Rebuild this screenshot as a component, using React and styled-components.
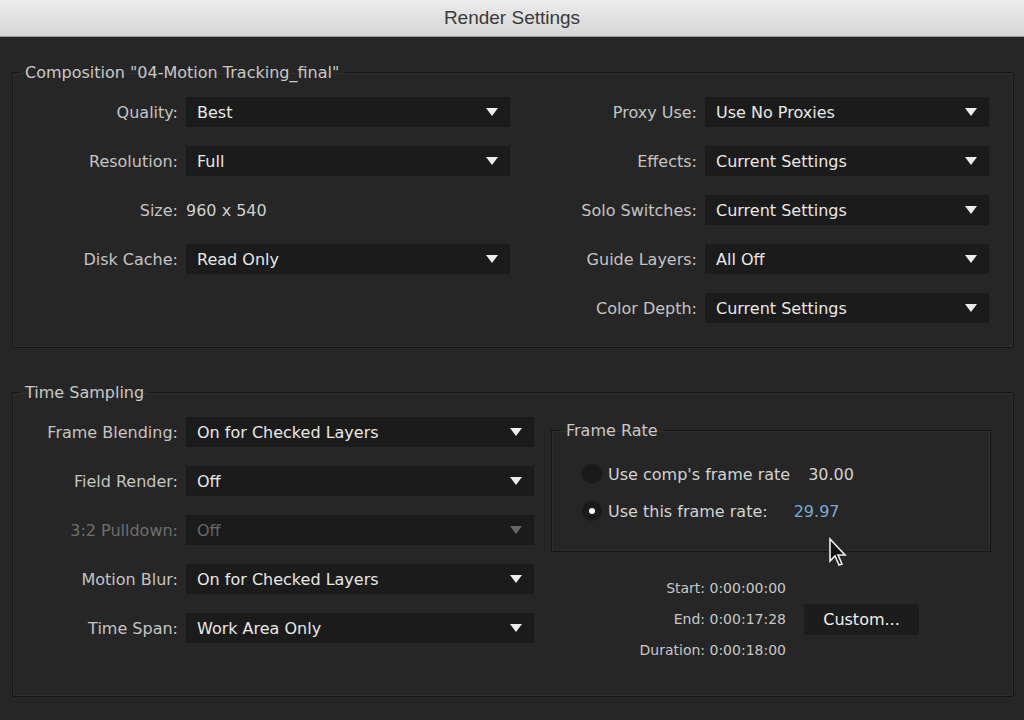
import React from "react";
import styled, { createGlobalStyle } from "styled-components";

const G = createGlobalStyle`
  html,body{margin:0;background:#262626;}
  body{font-family:"DejaVu Sans","Open Sans",sans-serif;}
`;
const Win = styled.div`width:1024px;height:720px;background:#262626;overflow:hidden;position:relative;`;
const Title = styled.div`height:36px;background:linear-gradient(#ececec,#d6d6d6);border-bottom:1px solid #9a9a9a;
  display:flex;align-items:center;justify-content:center;font-family:"Liberation Sans",sans-serif;font-size:19px;color:#3a3a3a;`;
const Body = styled.div`padding:26px 10px 0 12px;display:flex;flex-direction:column;gap:35px;`;
const Group = styled.fieldset`margin:0;border:1px solid #161616;box-shadow:inset 0 0 0 1px #2e2e2e;border-radius:2px;
  padding:${p=>p.$pad};height:${p=>p.$h}px;box-sizing:border-box;min-width:0;`;
const Legend = styled.legend`color:#c8c8c8;font-size:16px;padding:0 6px;margin-left:${p=>p.$ml ?? 6}px;`;
const Cols = styled.div`display:flex;gap:${p=>p.$gap}px;`;
const Col = styled.div`display:flex;flex-direction:column;gap:19px;`;
const Row = styled.div`display:flex;align-items:center;height:30px;gap:8px;`;
const Label = styled.div`width:${p=>p.$w}px;text-align:right;font-size:16px;color:${p=>p.$dim?"#6e6e6e":"#c4c4c4"};white-space:nowrap;`;
const Drop = styled.div`width:${p=>p.$w}px;height:30px;background:#1b1b1b;display:flex;align-items:center;justify-content:space-between;
  padding:0 12px 0 11px;box-sizing:border-box;font-size:16px;color:${p=>p.$dim?"#666":"#e8e8e8"};`;
const Arrow = styled.span`width:0;height:0;border-left:6px solid transparent;border-right:6px solid transparent;border-top:8px solid ${p=>p.$dim?"#666":"#eee"};`;
const Value = styled.div`font-size:16px;color:#d0d0d0;`;
const RateBox = styled.fieldset`margin:0;border:1px solid #161616;box-shadow:inset 0 0 0 1px #2e2e2e;width:440px;height:131px;box-sizing:border-box;
  padding:22px 0 0 30px;display:flex;flex-direction:column;gap:13px;`;
const Radio = styled.div`display:flex;align-items:center;gap:6px;font-size:16px;color:#d2d2d2;height:24px;`;
const Dot = styled.span`width:20px;height:20px;border-radius:50%;background:#1a1a1a;display:flex;align-items:center;justify-content:center;
  &::after{content:"";width:6px;height:6px;border-radius:50%;background:${p=>p.$on?"#fff":"transparent"};}`;
const Num = styled.span`margin-left:${p=>p.$m}px;color:${p=>p.$blue?"#7aaad6":"#d2d2d2"};`;
const RightCol = styled.div`display:flex;flex-direction:column;padding-top:4px;`;
const Times = styled.div`display:flex;align-items:center;margin-top:28px;`;
const TimeList = styled.div`width:235px;display:flex;flex-direction:column;gap:15px;text-align:right;font-size:14px;color:#c8c8c8;`;
const Btn = styled.div`margin-left:18px;width:115px;height:31px;background:#1c1c1c;color:#f0f0f0;font-size:16px;display:flex;align-items:center;justify-content:center;`;
const Cursor = styled.svg`position:absolute;left:828px;top:537px;`;

const D = ({w,v,dim})=> <Drop $w={w} $dim={dim}><span>{v}</span><Arrow $dim={dim}/></Drop>;

export default function App(){
  const comp1=[["Quality:","Best"],["Resolution:","Full"],["Size:",null,"960 x 540"],["Disk Cache:","Read Only"]];
  const comp2=[["Proxy Use:","Use No Proxies"],["Effects:","Current Settings"],["Solo Switches:","Current Settings"],["Guide Layers:","All Off"],["Color Depth:","Current Settings"]];
  const ts=[["Frame Blending:","On for Checked Layers"],["Field Render:","Off"],["3:2 Pulldown:","Off",true],["Motion Blur:","On for Checked Layers"],["Time Span:","Work Area Only"]];
  return <Win><G/>
    <Title>Render Settings</Title>
    <Body>
      <Group $pad="15px 0 0 0" $h={285}>
        <Legend>Composition "04-Motion Tracking_final"</Legend>
        <Cols $gap={0}>
          <Col>{comp1.map(([l,v,t])=><Row key={l}><Label $w={165}>{l}</Label>{v?<D w={324} v={v}/>:<Value>{t}</Value>}</Row>)}</Col>
          <Col>{comp2.map(([l,v])=><Row key={l}><Label $w={187}>{l}</Label><D w={284} v={v}/></Row>)}</Col>
        </Cols>
      </Group>
      <Group $pad="15px 0 0 0" $h={314}>
        <Legend>Time Sampling</Legend>
        <Cols $gap={17}>
          <Col>{ts.map(([l,v,dim])=><Row key={l}><Label $w={165} $dim={dim}>{l}</Label><D w={348} v={v} dim={dim}/></Row>)}</Col>
          <RightCol>
            <RateBox>
              <Legend $ml={-22}>Frame Rate</Legend>
              <Radio><Dot/>Use comp's frame rate<Num $m={12}>30.00</Num></Radio>
              <Radio><Dot $on/>Use this frame rate:<Num $m={20} $blue>29.97</Num></Radio>
            </RateBox>
            <Times>
              <TimeList><div>Start: 0:00:00:00</div><div>End: 0:00:17:28</div><div>Duration: 0:00:18:00</div></TimeList>
              <Btn>Custom...</Btn>
            </Times>
          </RightCol>
        </Cols>
      </Group>
    </Body>
    <Cursor width="22" height="30" viewBox="0 0 22 30"><path d="M2 2 L2 24 L7 19 L11 28 L14 27 L10 18 L17 18 Z" fill="#111" stroke="#eee" strokeWidth="1.6"/></Cursor>
  </Win>;
}
